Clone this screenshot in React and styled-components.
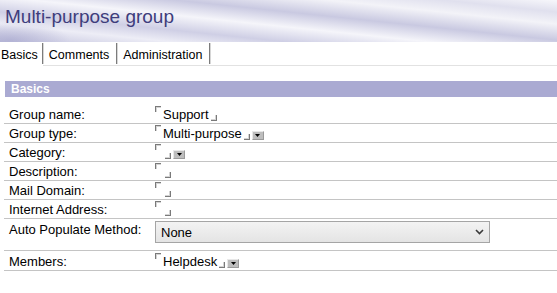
import styled, { createGlobalStyle } from "styled-components";

const GlobalStyle = createGlobalStyle`
  html, body {
    margin: 0;
    padding: 0;
    background: #ffffff;
  }
  body {
    font-family: Arial, "Liberation Sans", sans-serif;
    color: #000000;
  }
`;

const fields = [
  { label: "Group name:", value: "Support" },
  { label: "Group type:", value: "Multi-purpose", picker: true },
  { label: "Category:", value: "", picker: true },
  { label: "Description:", value: "" },
  { label: "Mail Domain:", value: "" },
  { label: "Internet Address:", value: "" },
  { label: "Auto Populate Method:", select: "None" },
  { label: "Members:", value: "Helpdesk", picker: true },
];

const tabs = ["Basics", "Comments", "Administration"];

const App = () => {
  return (
    <>
      <GlobalStyle />
      <Page>
        <Header>
          <Title>Multi-purpose group</Title>
        </Header>

        <TabBar>
          {tabs.map((tab, i) => (
            <TabCell key={tab} active={i === 0}>
              <TabLabel first={i === 0}>{tab}</TabLabel>
            </TabCell>
          ))}
          <TabFiller />
        </TabBar>

        <Section>
          <SectionTitle>Basics</SectionTitle>

          <Rows>
            {fields.map((field) => (
              <Row key={field.label} tall={!!field.select} last={field.label === "Members:"}>
                <Label tall={!!field.select}>{field.label}</Label>
                <Value>
                  {field.select ? (
                    <SelectWrap>
                      <Select defaultValue={field.select}>
                        <option>{field.select}</option>
                      </Select>
                      <Chevron width="9" height="6" viewBox="0 0 9 6">
                        <path d="M1 1 L4.5 4.5 L8 1" fill="none" stroke="#3a3a3a" strokeWidth="1.6" />
                      </Chevron>
                    </SelectWrap>
                  ) : (
                    <Field empty={!field.value}>
                      <StartMark />
                      {field.value ? <FieldText>{field.value}</FieldText> : <EmptyGap />}
                      <EndMark />
                      {field.picker && (
                        <Picker>
                          <svg width="5" height="3" viewBox="0 0 5 3">
                            <path d="M0 0 H5 L2.5 3 Z" fill="#000" />
                          </svg>
                        </Picker>
                      )}
                    </Field>
                  )}
                </Value>
              </Row>
            ))}
          </Rows>
        </Section>
      </Page>
    </>
  );
};

export default App;

const Page = styled.div`
  width: 557px;
  height: 293px;
  overflow: hidden;
  background: #ffffff;
`;

const Header = styled.div`
  height: 42px;
  padding: 6px 0 0 5px;
  box-sizing: border-box;
  background:
    radial-gradient(ellipse 60px 18px at 10px 40px, rgba(165, 165, 205, 0.6), rgba(165, 165, 205, 0) 100%),
    linear-gradient(
      186deg,
      #f7f7fb 0%,
      #e0e0ee 12%,
      #f3f3f8 24%,
      #c9c9e1 40%,
      #f5f5fa 55%,
      #cfcfe5 70%,
      #ededf6 82%,
      #c4c4de 100%
    );
`;

const Title = styled.h1`
  margin: 0;
  font-family: Arial, "Liberation Sans", sans-serif;
  font-weight: normal;
  font-size: 19px;
  line-height: 22px;
  color: #3e3d7c;
`;

const TabBar = styled.div`
  display: flex;
  height: 24px;
`;

const TabCell = styled.div`
  display: flex;
  align-items: flex-start;
  border-bottom: 1px solid ${(props) => (props.active ? "#ffffff" : "#e2e2e2")};
`;

const TabLabel = styled.div`
  display: flex;
  align-items: center;
  height: 21px;
  margin-top: 1px;
  padding: 2px ${(props) => (props.first ? "4px 0 1px" : "7px 0 6px")};
  box-sizing: border-box;
  font-size: 12.5px;
  color: #000000;
  border-right: 1px solid #7c7c7c;
  box-shadow: 1px 0 0 #d6d6d6;
`;

const TabFiller = styled.div`
  flex: 1;
  border-bottom: 1px solid #e2e2e2;
`;

const Section = styled.div`
  padding: 15px 0 0 4px;
`;

const SectionTitle = styled.div`
  height: 16px;
  margin-left: 1px;
  padding-left: 6px;
  background: #aaaad2;
  color: #ffffff;
  font-weight: bold;
  font-size: 12px;
  line-height: 16px;
`;

const Rows = styled.div`
  margin-top: 8px;
  display: flex;
  flex-direction: column;
`;

const Row = styled.div`
  display: flex;
  align-items: ${(props) => (props.tall ? "flex-start" : "center")};
  height: ${(props) => (props.tall ? "31px" : props.last ? "19px" : "18px")};
  border-bottom: 1px solid #c4c4c4;
`;

const Label = styled.div`
  width: 141px;
  padding-left: 5px;
  padding-top: ${(props) => (props.tall ? "3px" : "1px")};
  font-size: 13px;
  white-space: nowrap;
`;

const Value = styled.div`
  flex: 1;
  display: flex;
  align-items: center;
  padding-left: 5px;
`;

const Field = styled.div`
  display: flex;
  align-items: ${(props) => (props.empty ? "stretch" : "center")};
  height: 16px;
  font-size: 13px;
`;

const Mark = styled.span`
  display: block;
  width: 5px;
  height: 5px;
  flex-shrink: 0;
`;

const StartMark = styled(Mark)`
  align-self: flex-start;
  border-top: 1px solid #7a7a7a;
  border-left: 1px solid #7a7a7a;
  box-shadow: inset 1px 1px 0 #d4d4d4;
`;

const EndMark = styled(Mark)`
  align-self: flex-end;
  margin-bottom: 1px;
  margin-left: 2px;
  border-bottom: 1px solid #7a7a7a;
  border-right: 1px solid #7a7a7a;
  box-shadow: inset -1px -1px 0 #d4d4d4;
`;

const FieldText = styled.span`
  margin-left: 2px;
  padding-top: 2px;
  line-height: 16px;
`;

const EmptyGap = styled.span`
  width: 2px;
`;

const Picker = styled.span`
  display: flex;
  align-items: center;
  justify-content: center;
  align-self: flex-end;
  width: 10px;
  height: 7px;
  margin-left: 2px;
  margin-bottom: 1px;
  background: #bdbdbd;
  border: 1px solid #9a9a9a;
  border-top-color: #e8e8e8;
  border-left-color: #e8e8e8;
`;

const SelectWrap = styled.div`
  position: relative;
  margin-top: 2px;
  width: 335px;
  height: 22px;
`;

const Select = styled.select`
  appearance: none;
  width: 100%;
  height: 100%;
  margin: 0;
  padding: 0 0 0 5px;
  font-family: Arial, "Liberation Sans", sans-serif;
  font-size: 13px;
  color: #000000;
  background: linear-gradient(#f3f3f3, #e4e4e4);
  border: 1px solid #a5a5a5;
  border-radius: 0;
  outline: none;
`;

const Chevron = styled.svg`
  position: absolute;
  right: 6px;
  top: 8px;
  pointer-events: none;
`;
